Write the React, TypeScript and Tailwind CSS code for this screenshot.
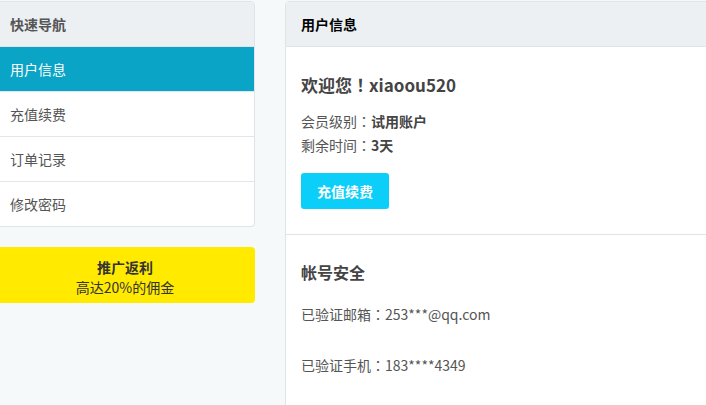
import React from 'react';

const navItems = ['用户信息', '充值续费', '订单记录', '修改密码'];

// full-width punctuation centred, like the reference's font
function Punct({ children }: { children: React.ReactNode }) {
    return <span style={{ fontFamily: '"Noto Sans CJK TC", sans-serif' }}>{children}</span>;
}

export default function App() {
    const font = { fontFamily: '"Noto Sans CJK SC", "Noto Sans", sans-serif' };
    return (
        <div className="h-[405px] w-[706px] overflow-hidden bg-[#f6f9fa] pt-px text-[#555]" style={font}>
            <div className="flex gap-[30px]">
                {/* sidebar */}
                <div className="-ml-[5px] flex w-[260px] shrink-0 flex-col gap-5">
                    <div className="overflow-hidden rounded border border-[#dfe4e7] bg-white">
                        <div className="flex h-[45px] items-center border-b border-[#dfe4e7] bg-[#ecf0f3] px-[14px] text-[14px] font-bold text-[#555]">
                            快速导航
                        </div>
                        {navItems.map((item, i) => (
                            <div
                                key={item}
                                className={
                                    i === 0
                                        ? 'flex h-[44px] items-center bg-[#0aa5c6] px-[14px] text-[14px] text-white'
                                        : 'flex h-[45px] items-center border-t border-[#e3e7ea] px-[14px] text-[14px] text-[#555]'
                                }
                            >
                                {item}
                            </div>
                        ))}
                    </div>
                    <div className="flex h-[56px] flex-col items-center justify-center rounded bg-[#ffea00] pt-[4px] text-[14px] leading-[20px] text-[#333]">
                        <span className="font-bold">推广返利</span>
                        <span>高达20%的佣金</span>
                    </div>
                </div>

                {/* main panel */}
                <div className="h-[420px] w-[460px] shrink-0 rounded border border-[#dfe4e7] bg-white">
                    <div className="flex h-[45px] items-center border-b border-[#dfe4e7] bg-[#ecf0f3] px-[15px] text-[14px] font-bold text-black">
                        用户信息
                    </div>
                    <div className="border-b border-[#dfe4e7] px-[15px] pb-[25px] pt-[26px]">
                        <h2 className="text-[17px] font-bold leading-[24px] text-[#444]">
                            欢迎您<Punct>！</Punct>xiaoou520
                        </h2>
                        <div className="mt-[12px] text-[14px] leading-[24px]">
                            <p>
                                会员级别<Punct>：</Punct>
                                <span className="font-bold text-[#444]">试用账户</span>
                            </p>
                            <p>
                                剩余时间<Punct>：</Punct>
                                <span className="font-bold text-[#444]">3天</span>
                            </p>
                        </div>
                        <button className="mt-[16px] h-[36px] w-[88px] rounded-[3px] bg-[#0bcff9] text-[14px] font-bold text-white">
                            充值续费
                        </button>
                    </div>
                    <div className="px-[15px] pt-[25px]">
                        <h3 className="text-[16px] font-bold leading-[24px] text-[#444]">帐号安全</h3>
                        <p className="mt-[18px] text-[14px] leading-[24px]">
                            已验证邮箱<Punct>：</Punct>253***@qq.com
                        </p>
                        <p className="mt-[27px] text-[14px] leading-[24px]">
                            已验证手机<Punct>：</Punct>183****4349
                        </p>
                    </div>
                </div>
            </div>
        </div>
    );
}
